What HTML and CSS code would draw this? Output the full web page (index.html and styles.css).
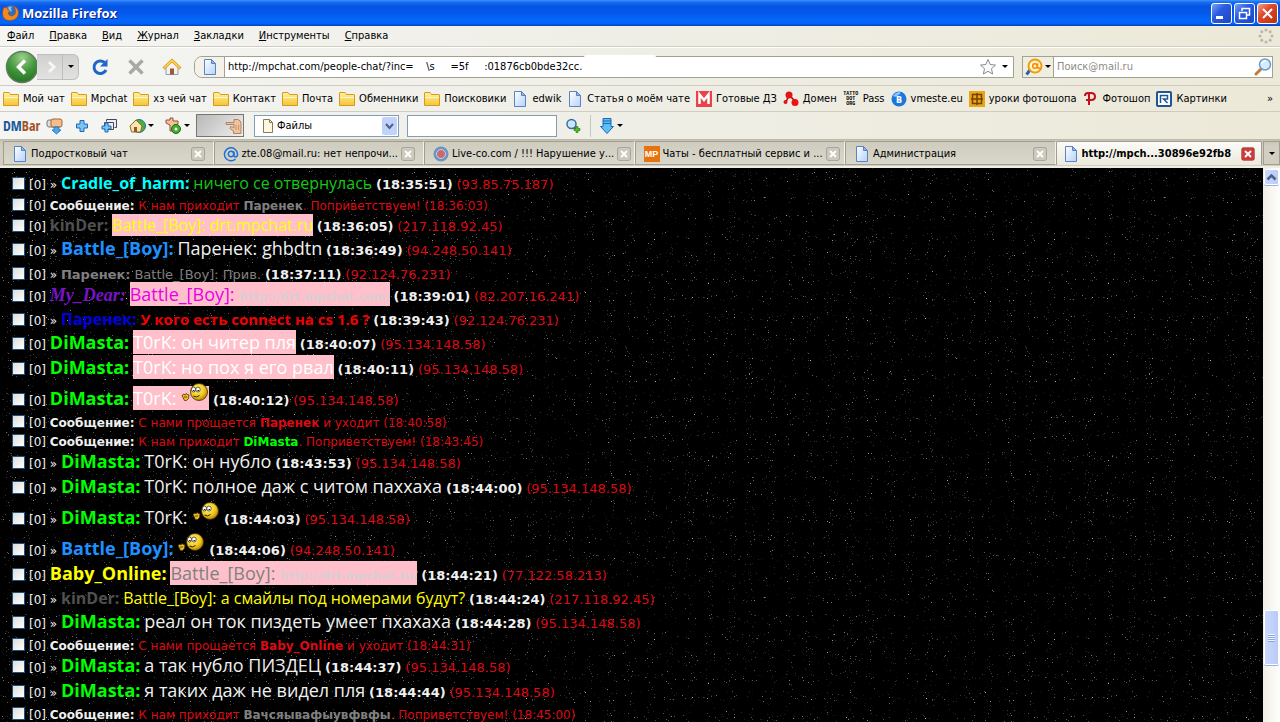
FILE: index.html
```
<!DOCTYPE html>
<html lang="ru">
<head>
  <meta charset="UTF-8">
  <title>Mozilla Firefox</title>
  <link rel="stylesheet" href="styles.css">
</head>
<body>

  <!-- Иконки -->
  <svg class="defs" width="0" height="0" aria-hidden="true">
    <defs>
      <linearGradient id="gFolder" x1="0" y1="0" x2="0" y2="1"><stop offset="0" stop-color="#fff0a0"/><stop offset="1" stop-color="#f5c432"/></linearGradient>
      <linearGradient id="gPage" x1="0" y1="0" x2="1" y2="1"><stop offset="0" stop-color="#ffffff"/><stop offset="1" stop-color="#b4d2fa"/></linearGradient>
      <radialGradient id="gFace" cx="0.4" cy="0.35" r="0.7"><stop offset="0" stop-color="#fff27a"/><stop offset="0.6" stop-color="#f2c81e"/><stop offset="1" stop-color="#a87800"/></radialGradient>
      <radialGradient id="gBack" cx="0.5" cy="0.2" r="0.9"><stop offset="0" stop-color="#9ccf8a"/><stop offset="0.5" stop-color="#43963c"/><stop offset="1" stop-color="#1c6a1e"/></radialGradient>
      <symbol id="folder" viewBox="0 0 16 16">
        <path d="M.5 14.500V2q0-.5.5-.5h5l1.500 2h7.500q.5 0 .5.500v10.500z" fill="url(#gFolder)" stroke="#d59b1c"/>
        <path d="M1 6.500h14" stroke="#fff6c8"/>
      </symbol>
      <symbol id="page" viewBox="0 0 16 16">
        <path d="M2.500.5h7l4 4v11h-11z" fill="url(#gPage)" stroke="#5b83c4"/>
        <path d="M9.500.5v4h4z" fill="#8fb4ea" stroke="#5b83c4"/>
      </symbol>
      <symbol id="smile" viewBox="0 0 28 22">
        <circle cx="18" cy="9" r="8.500" fill="url(#gFace)" stroke="#3a2c00" stroke-width=".8"/>
        <ellipse cx="12.500" cy="6.500" rx="2" ry="2.500" fill="#fff" stroke="#222" stroke-width=".7"/>
        <ellipse cx="17" cy="6.500" rx="2.200" ry="2.500" fill="#fff" stroke="#222" stroke-width=".7"/>
        <path d="M12 7.500h1.500M16.500 7.500h1.500M12.500 13q3 2 6-.5" fill="none" stroke="#222"/>
        <path d="M1 12.500l2-1.500 1 1 1-1.500 1.500 1 1.500.500-.5 3.500q-2 3-4 2z" fill="#e9b92a" stroke="#4a3400" stroke-width=".8"/>
        <path d="M3 14h3" stroke="#4a3400" stroke-width=".8"/>
      </symbol>
      <symbol id="lens" viewBox="0 0 18 18">
        <path d="M7 11l-5 5" stroke="#c47a3a" stroke-width="3" stroke-linecap="round"/>
        <circle cx="11" cy="6.500" r="5.500" fill="#d5ecff" stroke="#6f9bc8" stroke-width="1.500"/>
        <path d="M7.500 6q1-3 4-3" stroke="#fff" stroke-width="1.500" fill="none"/>
      </symbol>
      <symbol id="plus" viewBox="0 0 16 16">
        <path d="M6 2.500h4V6h3.500v4H10v3.500H6V10H2.500V6H6z" fill="#7cc4f4" stroke="#1d68b4"/>
      </symbol>
      <symbol id="cross" viewBox="0 0 14 14">
        <rect x=".5" y=".5" width="13" height="13" rx="2" fill="currentColor" stroke="#00000030"/>
        <path d="M4 4l6 6M10 4l-6 6" stroke="#fff" stroke-width="2"/>
      </symbol>
    </defs>
  </svg>

  <!-- Заголовок окна -->
  <header class="titlebar">
    <svg width="18" height="18" viewBox="0 0 18 18">
      <circle cx="9" cy="8.500" r="7.500" fill="#2a6fc8"/>
      <path d="M6 3q2-1 4 0l-1 2 1 2-3 1z" fill="#7fc0f0"/>
      <path d="M2 3q1 1 2 1 1-1 2-1-1 2 0 3l2 1-2 2q1 3 4 3 4-1 3.500-5 0-3-2-5 5 2 5 7-.5 7-8 7.500Q1 17 .5 9.500.5 6 2 3z" fill="#f08a1c" stroke="#a8480a" stroke-width=".6"/>
    </svg>
    <h1>Mozilla Firefox</h1>
    <button class="win" aria-label="Свернуть"><svg width="19" height="19" viewBox="0 0 19 19"><path d="M4 13.500h7" stroke="#fff" stroke-width="3"/></svg></button>
    <button class="win" aria-label="Развернуть"><svg width="19" height="19" viewBox="0 0 19 19"><path d="M7 7V4.500h7.500V11H12M4.500 8.500h7v6h-7zM4 8.500h8M7 4.500h8" fill="none" stroke="#fff" stroke-width="1.500"/></svg></button>
    <button class="win win-close" aria-label="Закрыть"><svg width="19" height="19" viewBox="0 0 19 19"><path d="M5 5l9 9M14 5l-9 9" stroke="#fff" stroke-width="2"/></svg></button>
  </header>

  <!-- Меню -->
  <nav class="menubar">
    <a href="#"><u>Ф</u>айл</a>
    <a href="#"><u>П</u>равка</a>
    <a href="#"><u>В</u>ид</a>
    <a href="#"><u>Ж</u>урнал</a>
    <a href="#"><u>З</u>акладки</a>
    <a href="#"><u>И</u>нструменты</a>
    <a href="#"><u>С</u>правка</a>
    <svg class="throbber" width="16" height="16" viewBox="0 0 16 16" fill="#b9b6ac">
      <circle cx="8" cy="2" r="1.500"/><circle cx="12.200" cy="3.800" r="1.500"/><circle cx="14" cy="8" r="1.500"/><circle cx="12.200" cy="12.200" r="1.500"/>
      <circle cx="8" cy="14" r="1.500"/><circle cx="3.800" cy="12.200" r="1.500"/><circle cx="2" cy="8" r="1.500"/><circle cx="3.800" cy="3.800" r="1.500"/>
    </svg>
  </nav>

  <!-- Навигация -->
  <div class="navbar">
    <div class="history">
      <button aria-label="Назад"><svg width="34" height="34" viewBox="0 0 34 34"><circle cx="17" cy="17" r="15.500" fill="url(#gBack)" stroke="#5f7f5c" stroke-width="1.500"/><path d="M20 10.500L13.500 17l6.500 6.500" fill="none" stroke="#fff" stroke-width="3.500"/></svg></button>
      <button class="forward" aria-label="Вперёд"><svg width="26" height="24" viewBox="0 0 26 24"><path d="M12 7l5 5-5 5" fill="none" stroke="#f6f6f6" stroke-width="3"/></svg></button>
      <button class="arrow" aria-label="История"></button>
    </div>
    <button class="tool" aria-label="Обновить"><svg width="18" height="18" viewBox="0 0 18 18"><path d="M13.500 4.500A6.300 6.300 0 1 0 15 12" fill="none" stroke="#1f66cc" stroke-width="3"/><path d="M16.500 1v7.500H9z" fill="#1f66cc"/></svg></button>
    <button class="tool" aria-label="Остановить"><svg width="18" height="18" viewBox="0 0 18 18"><path d="M2.500 2.500l13 13M15.500 2.500l-13 13" stroke="#a9a8a4" stroke-width="3.500"/></svg></button>
    <button class="tool" aria-label="Домой"><svg width="20" height="18" viewBox="0 0 20 18"><path d="M4 9v7.500h12V9l-6-6z" fill="#f4f2ee" stroke="#8f9cb4"/><path d="M1.500 10.500L10 2.500l8.500 8" fill="none" stroke="#d99412" stroke-width="3"/><path d="M2 10L10 2.500l8 7.500" fill="none" stroke="#ffd75e" stroke-width="1.500"/><path d="M8 10.500h4v6H8z" fill="#9a5a3a"/></svg></button>
    <div class="urlbar">
      <span class="favicon"><svg width="16" height="16"><use href="#page"/></svg></span>
      <input type="text" aria-label="Адрес" value="http://mpchat.com/people-chat/?inc=    \s     =5f     :01876cb0bde32cc.">
      <svg width="18" height="18" viewBox="0 0 18 18"><path d="M9 1.500l2.200 5 5.300.6-4 3.600 1.100 5.300L9 13.300 4.400 16l1.100-5.300-4-3.600 5.300-.6z" fill="#fafafa" stroke="#8a8a8a"/></svg>
      <button class="arrow" aria-label="Список адресов"></button>
    </div>
    <div class="search">
      <button class="engine" aria-label="Поисковик">
        <svg width="18" height="18" viewBox="0 0 18 18"><path d="M5 12l-3.500 4.500" stroke="#2b62b4" stroke-width="3"/><circle cx="10" cy="8" r="6.500" fill="#fff3c8" stroke="#f29a10" stroke-width="2"/><circle cx="10" cy="8" r="2.300" fill="none" stroke="#f08a00" stroke-width="1.500"/><path d="M12.500 5.500v4q1 1.500 2.500 0" fill="none" stroke="#f08a00" stroke-width="1.500"/></svg>
        <i class="tri"></i>
      </button>
      <input type="text" aria-label="Поиск" placeholder="Поиск@mail.ru">
      <svg width="18" height="18"><use href="#lens"/></svg>
    </div>
  </div>

  <!-- Закладки -->
  <nav class="bookmarks">
    <a href="#"><svg width="16" height="16"><use href="#folder"/></svg>Мой чат</a>
    <a href="#"><svg width="16" height="16"><use href="#folder"/></svg>Mpchat</a>
    <a href="#"><svg width="16" height="16"><use href="#folder"/></svg>хз чей чат</a>
    <a href="#"><svg width="16" height="16"><use href="#folder"/></svg>Контакт</a>
    <a href="#"><svg width="16" height="16"><use href="#folder"/></svg>Почта</a>
    <a href="#"><svg width="16" height="16"><use href="#folder"/></svg>Обменники</a>
    <a href="#"><svg width="16" height="16"><use href="#folder"/></svg>Поисковики</a>
    <a href="#"><svg width="16" height="16"><use href="#page"/></svg>edwik</a>
    <a href="#"><svg width="16" height="16"><use href="#page"/></svg>Статья о моём чате</a>
    <a href="#"><svg width="16" height="16" viewBox="0 0 16 16"><rect width="16" height="16" fill="#e8424a"/><path d="M3.500 13V3.500L8 9l4.500-5.500V13" fill="none" stroke="#fff" stroke-width="2.500"/></svg>Готовые ДЗ</a>
    <a href="#"><svg width="16" height="16" viewBox="0 0 16 16"><path d="M3 11l3-7 7 7" fill="none" stroke="#a00" stroke-width="1.500"/><circle cx="6" cy="4" r="3.500" fill="#e01414"/><circle cx="2.500" cy="11" r="2" fill="#e01414"/><circle cx="12" cy="11.500" r="3.500" fill="#f01010"/></svg>Домен</a>
    <a href="#"><span class="tattoo">TATTO<br>DOT<br>ORG</span>Pass</a>
    <a href="#"><svg width="16" height="16" viewBox="0 0 16 16"><circle cx="8" cy="8" r="7.500" fill="#1d78dc"/><path d="M2 5q3-4 7-4 1 2-2 3-1 3-5 1z" fill="#8cc8fa"/><text x="5" y="12" class="ico-b">B</text></svg>vmeste.eu</a>
    <a href="#"><svg width="16" height="16" viewBox="0 0 16 16"><rect width="16" height="16" fill="#eba414"/><path d="M3.500 3.500h9v9h-9zM8 2v12M2 8h12" fill="none" stroke="#6e4400" stroke-width="1.500"/></svg>уроки фотошопа</a>
    <a href="#"><svg width="16" height="16" viewBox="0 0 16 16"><path d="M3 5q0-3 3-3h3q4 0 4 3.500t-4 3.500H4M7 2.500V14" fill="none" stroke="#c4101c" stroke-width="2"/></svg>Фотошоп</a>
    <a href="#"><svg width="16" height="16" viewBox="0 0 16 16"><rect x="1" y="1" width="14" height="14" rx="1" fill="#fff" stroke="#1f5590" stroke-width="2"/><path d="M4.500 12V4.500h7V8h-4l4 4" fill="none" stroke="#1f5590" stroke-width="1.500"/></svg>Картинки</a>
    <button class="more" aria-label="Ещё">»</button>
  </nav>

  <!-- Панель DMBar -->
  <div class="dmbar">
    <b class="logo">DM<span>Bar</span></b>
    <button aria-label="Скачать всё"><svg width="18" height="18" viewBox="0 0 18 18"><rect x="1" y="3" width="8" height="7" rx="2" fill="#ddd" stroke="#777"/><rect x="5" y="2" width="11" height="8" rx="2" fill="#f3bd90" stroke="#a8642c"/><path d="M8 10h5v3h2l-4.500 4L6 13h2z" fill="#4aa8ec" stroke="#1d68b4" stroke-width=".8"/></svg></button>
    <button aria-label="Добавить"><svg width="16" height="16"><use href="#plus"/></svg></button>
    <button aria-label="Добавить группу"><svg width="18" height="18" viewBox="0 0 18 18"><path d="M6.500 4.500v-2h10v8h-2M4.500 5.500h9v7h-9z" fill="#eee" stroke="#446"/><path d="M5 6h3v3h3v3H8v3H5v-3H2V9h3z" fill="#7cc4f4" stroke="#1d68b4"/></svg></button>
    <button aria-label="Сайт"><svg width="18" height="18" viewBox="0 0 18 18"><circle cx="11" cy="9" r="6.500" fill="#4cae3c" stroke="#1c6fa8"/><path d="M2 9l6-6 6 6-1.500 6h-9z" fill="#f7e4b0" stroke="#9a6a1c"/><path d="M6 10h3v5H6z" fill="#8a5a2a"/></svg><i class="tri"></i></button>
    <button aria-label="Инструменты"><svg width="18" height="18" viewBox="0 0 18 18"><path d="M2 3h4V1h3v3h5v3l-4 1v6H6V8L2 6z" fill="#f0c39a" stroke="#a04a3a"/><circle cx="12" cy="12" r="4.500" fill="#3fae2c" stroke="#1d6e14"/><circle cx="12" cy="12" r="1.500" fill="#fff"/></svg><i class="tri"></i></button>
    <div class="drop"><svg width="18" height="20" viewBox="0 0 18 20"><path d="M1 6.500h8V3.500h4q3 1 3 4v10H8.500V15L5 12.500l.5-2 3.500 1V8.500H1z" fill="#f0c39a" stroke="#b08462"/><path d="M11 9v5M13.500 9v5" stroke="#c49a74"/></svg></div>
    <label class="combo">
      <svg width="14" height="14" viewBox="0 0 14 14"><path d="M2.500.5h6l3 3v10h-9z" fill="#fff8e0" stroke="#8a7a50"/><path d="M8.500.5v3h3" fill="none" stroke="#8a7a50"/></svg>
      <select aria-label="Тип поиска"><option>Файлы</option></select>
    </label>
    <input type="text" class="query" aria-label="Запрос">
    <button class="find" aria-label="Найти"><svg width="16" height="16" viewBox="0 0 16 16"><path d="M9 9l4 4" stroke="#557" stroke-width="2"/><circle cx="6.500" cy="6" r="4.500" fill="#c8e6fa" stroke="#3c6c9c" stroke-width="1.500"/><path d="M11 8.500h2v2h2v2h-2v2h-2v-2H9v-2h2z" fill="#5cbe2c" stroke="#2c7a14" stroke-width=".7"/></svg></button>
    <button class="get" aria-label="Загрузки"><svg width="16" height="18" viewBox="0 0 16 18"><path d="M4 1.500h8v8h2.500L8 16.500 1.500 9.500H4z" fill="#5cc0f4" stroke="#1d68b4"/><path d="M4 4h8M4 6.500h8" stroke="#1d68b4"/></svg><i class="tri"></i></button>
  </div>

  <!-- Вкладки -->
  <div class="tabs">
    <div class="tab"><svg width="16" height="16"><use href="#page"/></svg><span>Подростковый чат</span><button aria-label="Закрыть вкладку"><svg width="14" height="14"><use href="#cross"/></svg></button></div>
    <div class="tab"><svg width="16" height="16" viewBox="0 0 16 16" fill="none" stroke="#1f70d8" stroke-width="1.500"><path d="M12.500 13A6.500 6.500 0 1 1 14.500 8q0 3-2 3-1.500 0-1.500-2V5.500"/><circle cx="8" cy="8" r="2.700"/></svg><span>zte.08@mail.ru: нет непрочи...</span><button aria-label="Закрыть вкладку"><svg width="14" height="14"><use href="#cross"/></svg></button></div>
    <div class="tab"><svg width="16" height="16" viewBox="0 0 16 16"><circle cx="8" cy="8" r="6" fill="#c86a70" stroke="#6a94c4" stroke-width="3"/><circle cx="8" cy="8" r="4.500" fill="none" stroke="#c8d4e4"/></svg><span>Live-co.com / !!! Нарушение у...</span><button aria-label="Закрыть вкладку"><svg width="14" height="14"><use href="#cross"/></svg></button></div>
    <div class="tab"><span class="mp">MP</span><span>Чаты - бесплатный сервис и ...</span><button aria-label="Закрыть вкладку"><svg width="14" height="14"><use href="#cross"/></svg></button></div>
    <div class="tab"><svg width="16" height="16"><use href="#page"/></svg><span>Администрация</span><button aria-label="Закрыть вкладку"><svg width="14" height="14"><use href="#cross"/></svg></button></div>
    <div class="tab active"><svg width="16" height="16"><use href="#page"/></svg><span>http://mpch...30896e92fb8</span><button aria-label="Закрыть вкладку"><svg width="14" height="14"><use href="#cross"/></svg></button></div>
    <button class="arrow all" aria-label="Все вкладки"></button>
  </div>

  <!-- Чат -->
  <div class="view">
    <main class="chat">
      <p class="row mid"><input type="checkbox" aria-label="Выбрать">[0] » <b class="nick cyan">Cradle_of_harm:</b> <span class="msg leaf">ничего се отвернулась</span> <time>(18:35:51)</time> <i>(93.85.75.187)</i></p>
      <p class="row sys"><input type="checkbox" aria-label="Выбрать">[0] <b>Сообщение:</b> <em>К нам приходит <b class="gray">Паренек</b>. Поприветствуем! (18:36:03)</em></p>
      <p class="row mid"><input type="checkbox" aria-label="Выбрать">[0] <b class="nick dim">kinDer:</b> <span class="msg me yellow">Battle_[Boy]: drt.mpchat.ru</span> <time>(18:36:05)</time> <i>(217.118.92.45)</i></p>
      <p class="row big"><input type="checkbox" aria-label="Выбрать">[0] » <b class="nick blue">Battle_[Boy]:</b> <span class="msg">Паренек: ghbdtn</span> <time>(18:36:49)</time> <i>(94.248.50.141)</i></p>
      <p class="row plain"><input type="checkbox" aria-label="Выбрать">[0] » <b class="nick gray">Паренек:</b> <span class="msg gray">Battle_[Boy]: Прив.</span> <time>(18:37:11)</time> <i>(92.124.76.231)</i></p>
      <p class="row big"><input type="checkbox" aria-label="Выбрать">[0] <b class="nick script">My_Dear:</b> <span class="msg me magenta">Battle_[Boy]: <a href="#">http://drt.mpchat.com/</a></span> <time>(18:39:01)</time> <i>(82.207.16.241)</i></p>
      <p class="row mid"><input type="checkbox" aria-label="Выбрать">[0] » <b class="nick navy">Паренек:</b> <b class="msg red">У кого есть connect на cs 1.6 ?</b> <time>(18:39:43)</time> <i>(92.124.76.231)</i></p>
      <p class="row big"><input type="checkbox" aria-label="Выбрать">[0] <b class="nick lime">DiMasta:</b> <span class="msg me">T0rK: он читер пля</span> <time>(18:40:07)</time> <i>(95.134.148.58)</i></p>
      <p class="row big"><input type="checkbox" aria-label="Выбрать">[0] <b class="nick lime">DiMasta:</b> <span class="msg me">T0rK: но пох я его рвал</span> <time>(18:40:11)</time> <i>(95.134.148.58)</i></p>
      <p class="row big"><input type="checkbox" aria-label="Выбрать">[0] <b class="nick lime">DiMasta:</b> <span class="msg me">T0rK: <svg class="smile"><use href="#smile"/></svg></span> <time>(18:40:12)</time> <i>(95.134.148.58)</i></p>
      <p class="row sys"><input type="checkbox" aria-label="Выбрать">[0] <b>Сообщение:</b> <em>С нами прощается <b>Паренек</b> и уходит (18:40:58)</em></p>
      <p class="row sys"><input type="checkbox" aria-label="Выбрать">[0] <b>Сообщение:</b> <em>К нам приходит <b class="lime">DiMasta</b>. Поприветствуем! (18:43:45)</em></p>
      <p class="row big"><input type="checkbox" aria-label="Выбрать">[0] » <b class="nick lime">DiMasta:</b> <span class="msg">T0rK: он нубло</span> <time>(18:43:53)</time> <i>(95.134.148.58)</i></p>
      <p class="row big"><input type="checkbox" aria-label="Выбрать">[0] » <b class="nick lime">DiMasta:</b> <span class="msg">T0rK: полное даж с читом паххаха</span> <time>(18:44:00)</time> <i>(95.134.148.58)</i></p>
      <p class="row big"><input type="checkbox" aria-label="Выбрать">[0] » <b class="nick lime">DiMasta:</b> <span class="msg">T0rK: <svg class="smile"><use href="#smile"/></svg></span> <time>(18:44:03)</time> <i>(95.134.148.58)</i></p>
      <p class="row big"><input type="checkbox" aria-label="Выбрать">[0] » <b class="nick blue">Battle_[Boy]:</b> <span class="msg"> <svg class="smile"><use href="#smile"/></svg></span> <time>(18:44:06)</time> <i>(94.248.50.141)</i></p>
      <p class="row big"><input type="checkbox" aria-label="Выбрать">[0] <b class="nick yellow">Baby_Online:</b> <span class="msg me gray">Battle_[Boy]: <a href="#">http://drt.mpchat.ru/</a></span> <time>(18:44:21)</time> <i>(77.122.58.213)</i></p>
      <p class="row mid"><input type="checkbox" aria-label="Выбрать">[0] » <b class="nick dim">kinDer:</b> <span class="msg yellow">Battle_[Boy]: а смайлы под номерами будут?</span> <time>(18:44:24)</time> <i>(217.118.92.45)</i></p>
      <p class="row big"><input type="checkbox" aria-label="Выбрать">[0] » <b class="nick lime">DiMasta:</b> <span class="msg">реал он ток пиздеть умеет пхахаха</span> <time>(18:44:28)</time> <i>(95.134.148.58)</i></p>
      <p class="row sys"><input type="checkbox" aria-label="Выбрать">[0] <b>Сообщение:</b> <em>С нами прощается <b>Baby_Online</b> и уходит (18:44:31)</em></p>
      <p class="row big"><input type="checkbox" aria-label="Выбрать">[0] » <b class="nick lime">DiMasta:</b> <span class="msg">а так нубло ПИЗДЕЦ</span> <time>(18:44:37)</time> <i>(95.134.148.58)</i></p>
      <p class="row big"><input type="checkbox" aria-label="Выбрать">[0] » <b class="nick lime">DiMasta:</b> <span class="msg">я таких даж не видел пля</span> <time>(18:44:44)</time> <i>(95.134.148.58)</i></p>
      <p class="row sys"><input type="checkbox" aria-label="Выбрать">[0] <b>Сообщение:</b> <em>К нам приходит <b class="gray">Вачсяывафыувфвфы</b>. Поприветствуем! (18:45:00)</em></p>
    </main>
    <div class="scrollbar">
      <button aria-label="Вверх"><svg width="13" height="13" viewBox="0 0 13 13"><path d="M2.500 8.500l4-4 4 4" fill="none" stroke="#4d6185" stroke-width="2.500"/></svg></button>
      <div class="space"></div>
      <div class="thumb"></div>
      <div class="rest"></div>
    </div>
  </div>

</body>
</html>
```
FILE: styles.css
```
* { box-sizing: border-box; }
html, body { height: 100%; }
body {
  margin: 0;
  display: flex;
  flex-direction: column;
  overflow: hidden;
  background-color: #ece9d8;
  color: #000;
  font: 11px/16px Tahoma, "DejaVu Sans Condensed", sans-serif;
}
svg { display: block; flex: none; }
.defs { position: absolute; }
a { color: inherit; text-decoration: none; }
button {
  display: flex;
  align-items: center;
  justify-content: center;
  padding: 0;
  border: none;
  background: none;
  color: inherit;
  font: inherit;
}
input, select { font: inherit; margin: 0; }

.tri, .arrow::after {
  content: "";
  border: 3px solid transparent;
  border-top-color: #000;
  border-bottom: none;
}

/* заголовок */
.titlebar {
  flex: none;
  display: flex;
  align-items: center;
  gap: 2px;
  height: 26px;
  padding: 0 2px;
  background: linear-gradient(#3c96ff 0, #1a6cf0 8%, #0354e3 25%, #0458ea 50%, #0468fe 80%, #0464f4 90%, #0240c0 100%);
}
.titlebar h1 {
  flex: 1;
  margin: 0;
  color: #fff;
  font: bold 13px/18px "Trebuchet MS", "Open Sans", sans-serif;
  text-shadow: 1px 1px #0a1883;
}
.win {
  width: 21px;
  height: 21px;
  border: 1px solid #fff;
  border-radius: 3px;
  background: linear-gradient(135deg, #7c9ff4, #2a5be0 40%, #1c46c8);
}
.win-close { background: linear-gradient(135deg, #f0a088, #e0482a 40%, #b8320e); }

.menubar, .navbar, .bookmarks, .dmbar {
  flex: none;
  display: flex;
  align-items: center;
  background: linear-gradient(90deg, #f5f5f3, #efeee6 50%, #ece9d8);
}
.menubar {
  gap: 15px;
  height: 21px;
  padding: 0 6px 0 7px;
  border-bottom: 1px solid #d0cdbf;
}
.throbber { margin-left: auto; }

/* навигация */
.navbar {
  height: 38px;
  padding: 0 7px 0 5px;
  border-top: 1px solid #fff;
}
.history { display: flex; align-items: center; }
.forward, .history .arrow {
  height: 26px;
  border: 1px solid #bfbeba;
  border-left: none;
  background: linear-gradient(#d0d0ce, #e2e2e0);
}
.forward { width: 26px; margin-left: -2px; }
.history .arrow { width: 16px; border-radius: 0 6px 6px 0; }
.tool { width: 36px; }
.tool:first-of-type { margin-left: 3px; }
.urlbar, .search {
  display: flex;
  align-items: center;
  height: 22px;
  border: 1px solid #a3a18f;
  background-color: #fff;
}
.urlbar {
  position: relative;
  flex: 1;
  margin-left: 4px;
  border-radius: 8px 0 0 8px;
}
.urlbar::after {
  content: "";
  position: absolute;
  left: 389px;
  top: -2px;
  width: 72px;
  height: 5px;
  border-radius: 3px;
  background-color: #fff;
}
.favicon {
  width: 30px;
  height: 20px;
  padding: 2px 0 0 7px;
  border-right: 1px solid #a3a18f;
  border-radius: 8px 0 0 8px;
  background-color: #f4f2e8;
}
.urlbar input, .search input {
  flex: 1;
  min-width: 0;
  height: 20px;
  padding: 0 3px;
  border: none;
  background: none;
}
.urlbar .arrow { width: 16px; }
.search { width: 251px; margin-left: 8px; }
.search input::placeholder { color: #8c8c84; opacity: 1; }
.engine {
  gap: 2px;
  width: 31px;
  height: 20px;
  border-right: 1px solid #a3a18f;
  background-color: #f0eee0;
}

/* закладки */
.bookmarks {
  gap: 6px;
  height: 26px;
  padding: 1px 7px 0 3px;
  border-top: 1px solid #d0cdbf;
  white-space: nowrap;
}
.bookmarks a { display: flex; align-items: center; gap: 4px; }
.more { margin-left: auto; }
.tattoo {
  width: 16px;
  font: bold 5px/5px "Liberation Mono", monospace;
  text-align: center;
}
.ico-b { font: bold 8px "DejaVu Sans", sans-serif; fill: #fff; }

/* панель DMBar */
.dmbar {
  height: 28px;
  padding: 0 3px;
  border-top: 1px solid #d0cdbf;
}
.dmbar button { height: 22px; margin-left: 10px; gap: 2px; }
.logo {
  width: 38px;
  color: #1b5a9a;
  font: bold 14px/22px "Liberation Sans Narrow", "Open Sans Condensed", sans-serif;
}
.logo span { color: #a4522a; font-weight: normal; }
.dmbar button:first-of-type { margin-left: 5px; }
.drop {
  display: flex;
  align-items: center;
  justify-content: flex-end;
  width: 48px;
  height: 23px;
  margin-left: 6px;
  border: 1px solid #77756c;
  background: linear-gradient(135deg, #b8b8b8, #efefef);
}
.combo {
  display: flex;
  align-items: center;
  width: 145px;
  height: 22px;
  margin-left: 10px;
  padding-left: 6px;
  border: 1px solid #7f9db9;
  background-color: #fff;
}
.combo select {
  flex: 1;
  height: 20px;
  padding: 0 2px;
  border: none;
  appearance: none;
  background: url("data:image/svg+xml,%3Csvg xmlns='http://www.w3.org/2000/svg' width='16' height='18'%3E%3Crect width='15' height='18' rx='2' fill='%23c1d2fb'/%3E%3Cpath d='M4 7l3.500 4L11 7' fill='none' stroke='%234d6185' stroke-width='2'/%3E%3C/svg%3E") no-repeat right center;
}
.query {
  width: 150px;
  height: 22px;
  margin-left: 8px;
  border: 1px solid #7f9db9;
  background-color: #fff;
}
.dmbar .find { margin-left: 8px; }
.dmbar .get {
  margin-left: 9px;
  padding-left: 8px;
  border-left: 1px solid #c9c6b6;
}

/* вкладки */
.tabs {
  flex: none;
  display: flex;
  align-items: flex-end;
  height: 29px;
  padding: 0 0 1px 3px;
  border-top: 1px solid #bdbaaa;
  border-bottom: 2px solid #f0eee4;
  background: linear-gradient(#c6c3b4, #d2cfc2 6px);
}
.tab {
  flex: 1;
  display: flex;
  align-items: center;
  gap: 3px;
  min-width: 0;
  height: 24px;
  padding: 1px 8px 0;
  border: 1px solid #a19e90;
  border-right-color: #f4f2ea;
  border-radius: 2px 2px 0 0;
  background: linear-gradient(#cfccbf, #d9d6ca);
}
.tab span { white-space: nowrap; }
.tab button { margin-left: auto; color: #cbc8bc; }
.tab.active {
  padding: 1px 6px 0;
  border-color: #a19e90;
  border-bottom: none;
  background: linear-gradient(#fbfbf8, #ece9dc);
  font-weight: bold;
}
.tab.active button { color: #cc3a3a; }
.tab .mp {
  flex: none;
  width: 16px;
  height: 16px;
  background-color: #e8720c;
  color: #fff;
  font: bold 9px/16px "Liberation Sans Narrow", "Liberation Sans", sans-serif;
  text-align: center;
}
.all {
  width: 17px;
  height: 24px;
  margin-left: 1px;
  border: 1px solid #a19e90;
}

/* чат */
.view { flex: 1; display: flex; min-height: 0; }
.chat {
  flex: 1;
  overflow: hidden;
  padding: 6px 0 0 12px;
  background: #000 url("data:image/svg+xml,%3Csvg xmlns='http://www.w3.org/2000/svg' width='400' height='400'%3E%3Cfilter id='n' x='0' y='0' width='100%25' height='100%25' color-interpolation-filters='sRGB'%3E%3CfeTurbulence type='fractalNoise' baseFrequency='0.95' numOctaves='2' seed='4' stitchTiles='stitch'/%3E%3CfeColorMatrix values='4 .2 0 0 -2.950 4 .2 0 0 -2.950 4 0 .2 0 -2.950 0 0 0 0 1'/%3E%3C/filter%3E%3Crect width='400' height='400' filter='url(%23n)'/%3E%3C/svg%3E");
}
.row {
  margin: 0;
  color: #f0f0f0;
  font: 12px/19px Verdana, "DejaVu Sans", sans-serif;
  white-space: nowrap;
}
.row input {
  appearance: none;
  width: 13px;
  height: 13px;
  margin: 0 4px 0 0;
  border: 1px solid #1c5180;
  background: linear-gradient(135deg, #dcdcd7, #fff);
  vertical-align: -1px;
}
.row time, .row i { font-size: 13px; }
.row time { font-weight: bold; }
.row i, .row em { font-style: normal; color: #dc0a14; }
.nick, .msg { font-family: "Comic Sans MS", "Open Sans", sans-serif; }
.mid { padding-bottom: 2px; }
.mid .nick, .mid .msg { font-size: 16px; }
.mid .msg.red { font-size: 15px; }
.big { padding-bottom: 3px; }
.big .nick, .big .msg { font-size: 18px; }
.plain { padding-top: 1px; }
.plain .nick, .plain .msg { font-family: inherit; font-size: 13px; }
.big .nick.script {
  color: #7814c8;
  font: italic bold 18px/19px "Monotype Corsiva", "Liberation Serif", serif;
}
.me { background-color: #ffc0cb; color: #fff; }
.me a { color: #dccdd2; font: bold 13px/19px "DejaVu Sans Condensed", sans-serif; }
.smile {
  display: inline-block;
  width: 28px;
  height: 22px;
  vertical-align: baseline;
}

.cyan { color: #00ffff; }
.leaf { color: #14c814; }
.gray { color: #808080; }
.dim { color: #505050; }
.yellow { color: #ffff00; }
.blue { color: #1e90ff; }
.navy { color: #0000e0; }
.red { color: #f00000; }
.lime { color: #00ff00; }
.magenta { color: #e600e6; }

/* прокрутка */
.scrollbar {
  display: flex;
  flex-direction: column;
  align-items: center;
  width: 17px;
  padding: 1px 0;
  background: linear-gradient(90deg, #f0eee6, #fefefb);
}
.scrollbar button, .thumb {
  flex: none;
  width: 15px;
  border: 1px solid #fff;
  border-radius: 2px;
  background: linear-gradient(90deg, #cbd9fd, #b8cbf8);
  box-shadow: 0 1px #98b0e4;
}
.scrollbar button { height: 16px; }
.space { flex: 425 0 0; }
.thumb {
  display: flex;
  height: 55px;
  align-items: center;
  justify-content: center;
}
.thumb::after {
  content: "";
  width: 7px;
  height: 8px;
  background: repeating-linear-gradient(#eef4fe 0 1px, #8ca6e0 1px 2px);
}
.rest { flex: 56 0 0; }
```
